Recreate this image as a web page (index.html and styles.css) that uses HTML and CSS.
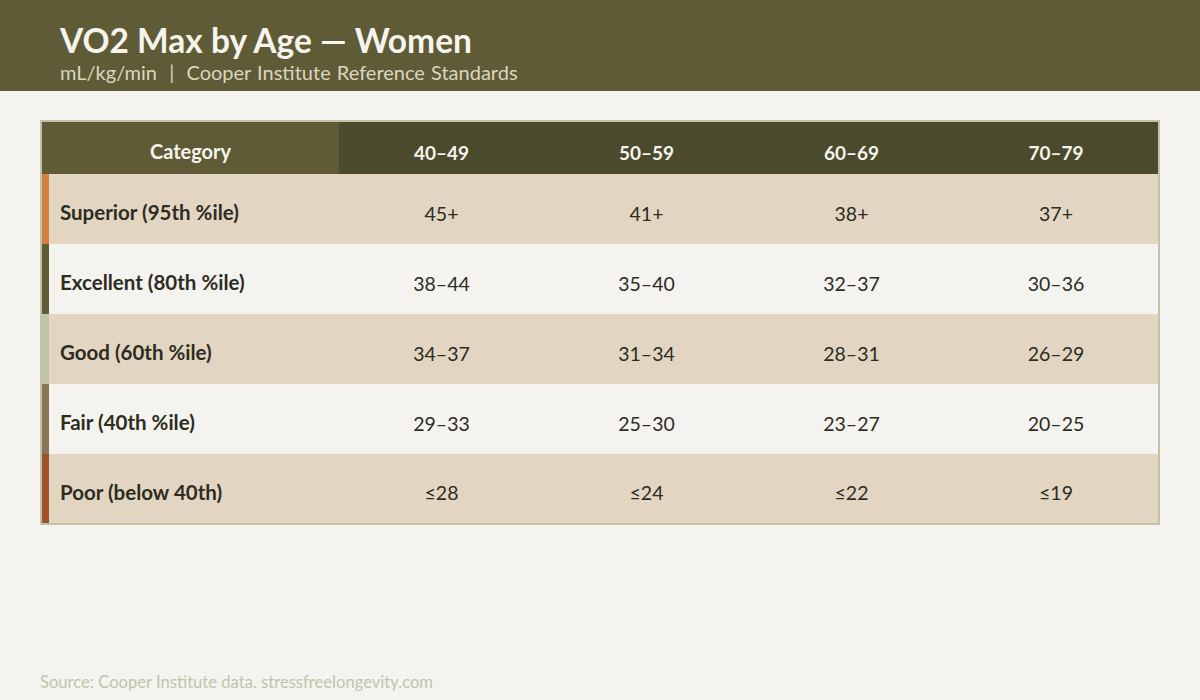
FILE: index.html
```html
<!DOCTYPE html>
<html>
<head>
<meta charset="utf-8">
<link rel="stylesheet" href="styles.css">
</head>
<body>
<header class="hero">
  <h1 class="title">VO2 Max by Age — Women</h1>
  <p class="subtitle">mL/kg/min &nbsp;|&nbsp; Cooper Institute Reference Standards</p>
</header>
<main class="content">
  <table class="grid">
    <thead>
      <tr>
        <th class="cat-head">Category</th>
        <th>40–49</th>
        <th>50–59</th>
        <th>60–69</th>
        <th>70–79</th>
      </tr>
    </thead>
    <tbody>
      <tr class="row-tan">
        <td class="cat"><span class="accent accent-superior"></span>Superior (95th %ile)</td>
        <td>45+</td><td>41+</td><td>38+</td><td>37+</td>
      </tr>
      <tr class="row-light">
        <td class="cat"><span class="accent accent-excellent"></span>Excellent (80th %ile)</td>
        <td>38–44</td><td>35–40</td><td>32–37</td><td>30–36</td>
      </tr>
      <tr class="row-tan">
        <td class="cat"><span class="accent accent-good"></span>Good (60th %ile)</td>
        <td>34–37</td><td>31–34</td><td>28–31</td><td>26–29</td>
      </tr>
      <tr class="row-light">
        <td class="cat"><span class="accent accent-fair"></span>Fair (40th %ile)</td>
        <td>29–33</td><td>25–30</td><td>23–27</td><td>20–25</td>
      </tr>
      <tr class="row-tan">
        <td class="cat"><span class="accent accent-poor"></span>Poor (below 40th)</td>
        <td>≤28</td><td>≤24</td><td>≤22</td><td>≤19</td>
      </tr>
    </tbody>
  </table>
</main>
<footer class="source">Source: Cooper Institute data. stressfreelongevity.com</footer>
</body>
</html>
```
FILE: styles.css
```css
* { box-sizing: border-box; }
html, body { margin: 0; padding: 0; }
body {
  width: 1200px;
  height: 700px;
  background: #f4f3ef;
  font-family: Lato, "Liberation Sans", sans-serif;
  color: #2d2c1f;
  display: flex;
  flex-direction: column;
  overflow: hidden;
}
.hero {
  background: #5e5b36;
  height: 91px;
  padding: 20px 60px 0;
}
.title {
  margin: 0;
  font-size: 33.5px;
  font-weight: 700;
  line-height: 40px;
  color: #f6f4ec;
}
.subtitle {
  margin: 0;
  font-size: 20px;
  line-height: 24px;
  color: #ddd5c0;
  word-spacing: 1px;
}
.content {
  padding: 29px 40px 0;
  flex: 1;
}
.grid {
  width: 1120px;
  border-collapse: collapse;
  border: 2px solid #c1c2a8;
  table-layout: fixed;
}
.grid th {
  height: 53px;
  background: #4b4a2c;
  color: #f6f4ec;
  font-size: 19px;
  font-weight: 700;
  text-align: center;
  padding: 8px 0 0;
}
.grid th.cat-head {
  width: 298px;
  background: #5e5b36;
  font-size: 20px;
  padding-top: 6px;
}
.grid td {
  height: 70px;
  padding: 8px 0 0;
  text-align: center;
  font-size: 19.5px;
  vertical-align: middle;
}
.grid td.cat {
  position: relative;
  text-align: left;
  padding: 6px 0 0 18px;
  font-size: 20.5px;
  font-weight: 700;
}
.accent {
  position: absolute;
  left: 0;
  top: 0;
  bottom: 0;
  width: 7px;
}
.accent-superior { background: #d4803f; }
.accent-excellent { background: #5e5b36; }
.accent-good { background: #c1c4ab; }
.accent-fair { background: #8b7355; }
.accent-poor { background: #a0522d; }
.row-tan { background: #e2d6c2; }
.row-light { background: #f4f3ef; }
.source {
  padding: 0 40px 8px;
  font-size: 16.6px;
  line-height: 20px;
  color: #c3c4aa;
}
```
